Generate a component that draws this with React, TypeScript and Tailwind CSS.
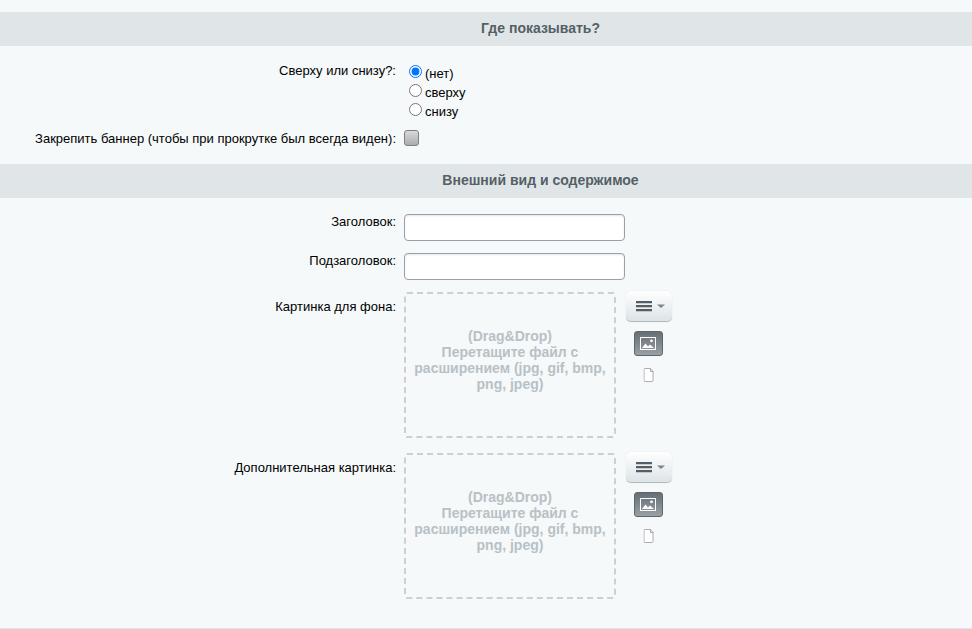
import React from 'react';

function SectionTitle({ children }: { children: React.ReactNode }) {
    return (
        <div className="h-[34px] bg-[#e0e6e7] pl-[109px] text-center text-[14px] leading-[32px] font-bold text-[#546066]">
            {children}
        </div>
    );
}

function Row({ label, className, labelClassName, children }: { label: string; className?: string; labelClassName?: string; children: React.ReactNode }) {
    return (
        <div className={`flex ${className ?? ''}`}>
            <div className={`w-[396px] shrink-0 text-right text-[13px] leading-[15px] text-black ${labelClassName ?? ''}`}>{label}</div>
            <div className="ml-2">{children}</div>
        </div>
    );
}

function RadioOption({ label, checked }: { label: string; checked?: boolean }) {
    return (
        <label className="flex h-[19px] items-start pl-[5px]">
            <input type="radio" name="position" defaultChecked={checked} className="m-0 mr-[3px] h-[13px] w-[13px]" />
            <span className="mt-px text-[13px] leading-[15px] text-black">{label}</span>
        </label>
    );
}

function TextField() {
    return (
        <input
            type="text"
            className="block h-[27px] w-[221px] rounded-[4px] border border-[#9a9fae] bg-white shadow-[inset_0_1px_2px_rgba(0,0,0,0.1)] outline-none"
        />
    );
}

function ImageDrop() {
    return (
        <div className="flex items-start">
            <div className="h-[146px] w-[212px] rounded-[3px] border-2 border-dashed border-[#ccd0d1] px-2 pt-[34px] text-center text-[14px] leading-[16px] font-bold text-[#b8c1c6]">
                (Drag&amp;Drop)
                <br />
                Перетащите файл с расширением (jpg, gif, bmp, png, jpeg)
            </div>
            <div className="-mt-px ml-[10px] flex w-[46px] flex-col items-center">
                <button className="flex h-[31px] w-[46px] items-center justify-center rounded-[5px] border-b border-b-[#b5babb] bg-gradient-to-b from-[#ffffff] to-[#dde4e6] shadow-[0_0_1px_rgba(0,0,0,0.2)]">
                    <svg className="ml-1" width="30" height="12" viewBox="0 0 30 12">
                        <path d="M0 1h16v2.300H0zM0 5h16v2.300H0zM0 9h16v2.300H0z" fill="#535f66" />
                        <path d="M21 4.500h8l-4 3.500z" fill="#7b858d" />
                    </svg>
                </button>
                <button className="mt-[9px] flex h-[25px] w-[29px] -translate-x-px items-center justify-center rounded-[3px] border border-[#5e666d] bg-gradient-to-b from-[#666e76] to-[#9aa1a6]">
                    <svg width="16" height="13" viewBox="0 0 16 13">
                        <rect x="0.500" y="0.500" width="15" height="12" fill="none" stroke="#fff" />
                        <path d="M2 11l3.500-4.500 2.500 3 2-2 4 3.500z" fill="#fff" />
                        <circle cx="11.500" cy="3.800" r="1.400" fill="#fff" />
                    </svg>
                </button>
                <svg className="mt-3 -translate-x-[0.500px]" width="11" height="14" viewBox="0 0 11 14">
                    <path d="M0.500 1.500q0-1 1-1h5.500l2.500 3v9q0 1-1 1h-7q-1 0-1-1z" fill="#fff" stroke="#a9aeb1" />
                    <path d="M7 0.500v3h3" fill="none" stroke="#a9aeb1" />
                </svg>
            </div>
        </div>
    );
}

export default function App() {
    return (
        <div className="h-[629px] overflow-hidden border-b border-[#dde6ec] bg-[#f5f9f9] pt-3 font-['Liberation_Sans',Arial,sans-serif]">
            <SectionTitle>Где показывать?</SectionTitle>

            <Row label="Сверху или снизу?:" className="mt-[17px]">
                <div className="pt-[2px]">
                    <RadioOption label="(нет)" checked />
                    <RadioOption label="сверху" />
                    <RadioOption label="снизу" />
                </div>
            </Row>

            <Row label="Закрепить баннер (чтобы при прокрутке был всегда виден):" className="mt-2" labelClassName="pt-px">
                <div className="h-[16px] w-[15px] rounded-[3px] border border-[#7d8186] bg-gradient-to-b from-[#d8d9db] to-[#a9acb0]" />
            </Row>

            <div className="mt-[18px]">
                <SectionTitle>Внешний вид и содержимое</SectionTitle>
            </div>

            <Row label="Заголовок:" className="mt-4">
                <TextField />
            </Row>
            <Row label="Подзаголовок:" className="mt-3">
                <TextField />
            </Row>
            <Row label="Картинка для фона:" className="mt-3" labelClassName="pt-[7px]">
                <ImageDrop />
            </Row>
            <Row label="Дополнительная картинка:" className="mt-[15px]" labelClassName="pt-[7px]">
                <ImageDrop />
            </Row>
        </div>
    );
}
